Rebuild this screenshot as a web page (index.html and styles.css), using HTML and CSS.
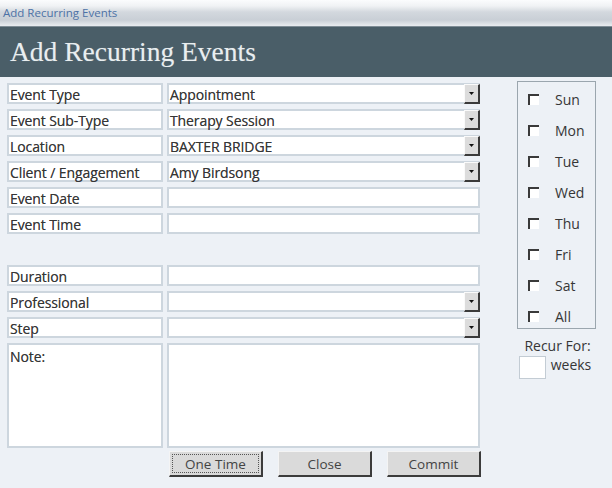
FILE: index.html
```html
<!DOCTYPE html>
<html>
<head>
<meta charset="utf-8">
<link rel="stylesheet" href="styles.css">
</head>
<body>
<div class="titlebar">Add Recurring Events</div>
<div class="header"><h1 class="title">Add Recurring Events</h1></div>
<div class="main">
  <div class="form">
    <div class="grid">
      <div class="lbl">Event Type</div><div class="val combo"><span class="txt">Appointment</span><span class="drop"><svg width="5" height="3" viewBox="0 0 5 3"><path d="M0 0H5L2.5 3Z" fill="#111"/></svg></span></div>
      <div class="lbl">Event Sub-Type</div><div class="val combo"><span class="txt">Therapy Session</span><span class="drop"><svg width="5" height="3" viewBox="0 0 5 3"><path d="M0 0H5L2.5 3Z" fill="#111"/></svg></span></div>
      <div class="lbl">Location</div><div class="val combo"><span class="txt">BAXTER BRIDGE</span><span class="drop"><svg width="5" height="3" viewBox="0 0 5 3"><path d="M0 0H5L2.5 3Z" fill="#111"/></svg></span></div>
      <div class="lbl">Client / Engagement</div><div class="val combo"><span class="txt">Amy Birdsong</span><span class="drop"><svg width="5" height="3" viewBox="0 0 5 3"><path d="M0 0H5L2.5 3Z" fill="#111"/></svg></span></div>
      <div class="lbl">Event Date</div><div class="val"></div>
      <div class="lbl">Event Time</div><div class="val"></div>
      <div class="spacer"></div>
      <div class="lbl">Duration</div><div class="val"></div>
      <div class="lbl">Professional</div><div class="val combo"><span class="txt"></span><span class="drop"><svg width="5" height="3" viewBox="0 0 5 3"><path d="M0 0H5L2.5 3Z" fill="#111"/></svg></span></div>
      <div class="lbl">Step</div><div class="val combo"><span class="txt"></span><span class="drop"><svg width="5" height="3" viewBox="0 0 5 3"><path d="M0 0H5L2.5 3Z" fill="#111"/></svg></span></div>
      <div class="lbl note">Note:</div><div class="val note"></div>
    </div>
    <div class="buttons">
      <button class="btn focus"><span>One Time</span></button>
      <button class="btn"><span>Close</span></button>
      <button class="btn"><span>Commit</span></button>
    </div>
  </div>
  <div class="side">
    <div class="days">
      <div class="day"><span class="cb"></span><span>Sun</span></div>
      <div class="day"><span class="cb"></span><span>Mon</span></div>
      <div class="day"><span class="cb"></span><span>Tue</span></div>
      <div class="day"><span class="cb"></span><span>Wed</span></div>
      <div class="day"><span class="cb"></span><span>Thu</span></div>
      <div class="day"><span class="cb"></span><span>Fri</span></div>
      <div class="day"><span class="cb"></span><span>Sat</span></div>
      <div class="day"><span class="cb"></span><span>All</span></div>
    </div>
    <div class="recur">
      <div class="recur-lbl">Recur For:</div>
      <div class="recur-row"><span class="weeks-box"></span><span>weeks</span></div>
    </div>
  </div>
</div>
</body>
</html>
```

FILE: styles.css
```css
html, body {
  margin: 0;
  padding: 0;
}
body {
  width: 612px;
  height: 488px;
  background: #edf1f6;
  font-family: "Open Sans", "Liberation Sans", sans-serif;
  font-size: 14px;
  color: #363636;
  overflow: hidden;
}
.titlebar {
  height: 27px;
  box-sizing: border-box;
  padding: 5px 0 0 3px;
  font-size: 11.5px;
  color: #4d72a6;
  background: linear-gradient(#fbfcfd 0px, #f0f2f4 6px, #d3d8de 12px, #c9cfd6 20px, #e4e8ec 25px, #eef1f4 27px);
  border-bottom: 1px solid #7f8d96;
}
.header {
  height: 50px;
  background: #4a5e68;
  display: flex;
  align-items: center;
  padding-left: 10px;
}
.title {
  margin: 0;
  font-family: "Liberation Serif", "DejaVu Serif", serif;
  font-weight: normal;
  font-size: 27.5px;
  color: #e9eef0;
  text-shadow: 0 0 1px rgba(255,255,255,0.3);
}
.main {
  display: flex;
  padding: 6px 0 0 7px;
}
.grid {
  display: grid;
  grid-template-columns: 156px 313px;
  grid-auto-rows: 21px;
  column-gap: 4px;
  row-gap: 5px;
}
.lbl, .val {
  background: #fff;
  border: 2px solid #cdd6de;
  box-sizing: border-box;
  text-shadow: 0 0 0.5px rgba(40,40,40,0.6);
}
.lbl {
  padding: 1px 0 0 1px;
  line-height: 17px;
  white-space: nowrap;
  letter-spacing: -0.1px;
}
.spacer {
  grid-column: 1 / 3;
}
.note {
  grid-row: span 4;
  height: 105px;
}
.lbl.note {
  padding-top: 4px;
  line-height: 15px;
}
.combo {
  display: flex;
  align-items: stretch;
}
.txt {
  flex: 1;
  padding: 1px 0 0 1px;
  line-height: 17px;
  letter-spacing: -0.1px;
}
.drop {
  width: 16px;
  margin: -1px -2px -2px 0;
  background: #dcdcdc;
  border-top: 1px solid #fafafa;
  border-left: 1px solid #fafafa;
  border-right: 2px solid #3a3a3a;
  border-bottom: 2px solid #3a3a3a;
  box-sizing: border-box;
  display: flex;
  align-items: center;
  justify-content: center;
}
.buttons {
  display: flex;
  gap: 15px;
  padding: 9px 0 0 162px;
}
.btn {
  width: 94px;
  height: 26px;
  padding: 2px;
  font-family: inherit;
  font-size: 13.5px;
  color: #444;
  background: #dadada;
  border-top: 1px solid #f4f4f4;
  border-left: 1px solid #f4f4f4;
  border-right: 2px solid #3c3c3c;
  border-bottom: 2px solid #3c3c3c;
  box-sizing: border-box;
}
.btn span {
  display: block;
  height: 100%;
  line-height: 18px;
  border: 1px dotted transparent;
  box-sizing: border-box;
}
.btn.focus span {
  border-color: #555;
}
.side {
  margin-left: 36px;
  margin-top: -2px;
  display: flex;
  flex-direction: column;
  align-items: flex-start;
}
.days {
  width: 79px;
  height: 248px;
  box-sizing: border-box;
  border: 1px solid #9ba6ae;
  padding: 7px 0 2px 10px;
  display: flex;
  flex-direction: column;
  gap: 11px;
}
.day {
  height: 20px;
  display: flex;
  align-items: center;
}
.cb {
  width: 11px;
  height: 11px;
  box-sizing: border-box;
  background: #fff;
  border-top: 2px solid #3a3a3a;
  border-left: 2px solid #3a3a3a;
  margin-right: 16px;
}
.recur {
  width: 79px;
  display: flex;
  flex-direction: column;
  align-items: center;
  padding-top: 8px;
}
.recur-lbl {
  line-height: 18px;
  margin-left: 2px;
  white-space: nowrap;
}
.recur-row {
  display: flex;
  align-items: flex-start;
  gap: 5px;
  margin-left: -3px;
}
.weeks-box {
  width: 27px;
  height: 23px;
  background: #fff;
  border: 1px solid #c3ccd4;
  box-sizing: border-box;
  margin-top: 1px;
}
.recur-row span:last-child {
  line-height: 20px;
}
```
